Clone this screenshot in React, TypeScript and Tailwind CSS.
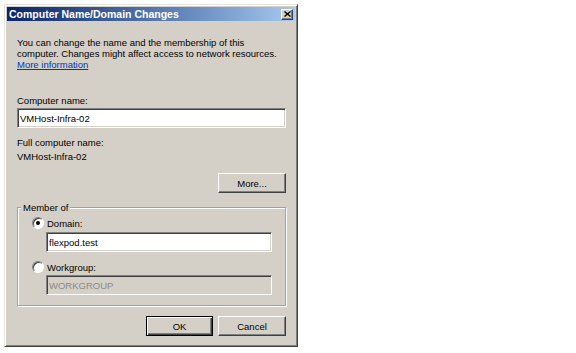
const font = "font-['Liberation_Sans','Arial',sans-serif]";

const raised =
  "border border-t-white border-l-white border-r-[#404040] border-b-[#404040] shadow-[inset_-1px_-1px_0_#808080]";
const sunken =
  "border border-t-[#808080] border-l-[#808080] border-r-white border-b-white shadow-[inset_1px_1px_0_#404040,inset_-1px_-1px_0_#d4d0c8]";

const App = () => {
  return (
    <div className={`w-[576px] h-[353px] bg-white pt-[4px] pl-[4px] ${font} text-[9.5px] leading-[11px] text-black`}>
      <div className="w-[294px] h-[343px] bg-[#d4d0c8] border border-t-[#e6e3de] border-l-[#e6e3de] border-r-[#404040] border-b-[#404040] shadow-[inset_1px_1px_0_#fff,inset_-1px_-1px_0_#808080] p-[2px] flex flex-col">
        {/* title bar */}
        <div className="h-[14px] flex items-center justify-between pl-[2px] pr-[2px] bg-gradient-to-r from-[#0a246a] to-[#a6caf0]">
          <span className="text-white font-bold text-[10.5px] leading-[14px]">
            Computer Name/Domain Changes
          </span>
          <button className={`w-[12px] h-[11px] bg-[#d4d0c8] flex items-center justify-center ${raised}`}>
            <svg width="7" height="6" viewBox="0 0 7 6">
              <path d="M0.5 0.5 L6.5 5.5 M6.5 0.5 L0.5 5.5" stroke="#000" strokeWidth="1.4" />
            </svg>
          </button>
        </div>

        <div className="flex flex-col pl-[10px] pr-[9px]">
          <p className="mt-[16px]">
            You can change the name and the membership of this
            <br />
            computer. Changes might affect access to network resources.
            <br />
            <a className="text-[#0033cc] underline">More information</a>
          </p>

          <label className="mt-[25px]">Computer name:</label>
          <Field value="VMHost-Infra-02" className="mt-[2px] w-full" />

          <span className="mt-[9px]">Full computer name:</span>
          <span className="mt-[3px]">VMHost-Infra-02</span>

          <div className="mt-[11px] flex justify-end">
            <Button label="More..." className="w-[68px]" />
          </div>

          {/* group box */}
          <div className="relative mt-[14px] border border-[#a0a0a0] shadow-[1px_1px_0_#fff,inset_1px_1px_0_#fff] pt-[9px] pb-[10px]">
            <span className="absolute left-[3px] top-[-6px] bg-[#d4d0c8] px-[2px]">Member of</span>
            <Radio label="Domain:" checked />
            <Field value="flexpod.test" className="mt-[3px] ml-[28px] w-[226px]" />
            <div className="mt-[9px]">
              <Radio label="Workgroup:" />
            </div>
            <Field value="WORKGROUP" disabled className="mt-[2px] ml-[28px] w-[226px]" />
          </div>

          <div className="mt-[10px] flex justify-end gap-[5px]">
            <Button label="OK" className="w-[67px]" primary />
            <Button label="Cancel" className="w-[68px]" />
          </div>
        </div>
      </div>
    </div>
  );
};

export default App;

// ========== COMPONENTS ==========

const Field = ({
  value,
  disabled,
  className,
}: {
  value: string;
  disabled?: boolean;
  className?: string;
}) => {
  return (
    <div
      className={`h-[20px] flex items-center pl-[2px] ${sunken} ${
        disabled ? "bg-[#d4d0c8] text-[#8a8a8a]" : "bg-white"
      } ${className ?? ""}`}
    >
      {value}
    </div>
  );
};

const Button = ({
  label,
  primary,
  className,
}: {
  label: string;
  primary?: boolean;
  className?: string;
}) => {
  return (
    <button
      className={`h-[20px] bg-[#d4d0c8] flex items-center justify-center ${
        primary
          ? "border border-black shadow-[inset_1px_1px_0_#fff,inset_-1px_-1px_0_#404040,inset_-2px_-2px_0_#808080]"
          : raised
      } ${className ?? ""}`}
    >
      {label}
    </button>
  );
};

const Radio = ({ label, checked }: { label: string; checked?: boolean }) => {
  return (
    <div className="flex items-center h-[12px] pl-[14px] gap-[3px]">
      <span className="w-[12px] h-[12px] rounded-full bg-white border border-t-[#808080] border-l-[#808080] border-r-white border-b-white shadow-[inset_1px_1px_0_#404040] flex items-center justify-center">
        {checked && <span className="w-[4px] h-[4px] rounded-full bg-black" />}
      </span>
      <span>{label}</span>
    </div>
  );
};
